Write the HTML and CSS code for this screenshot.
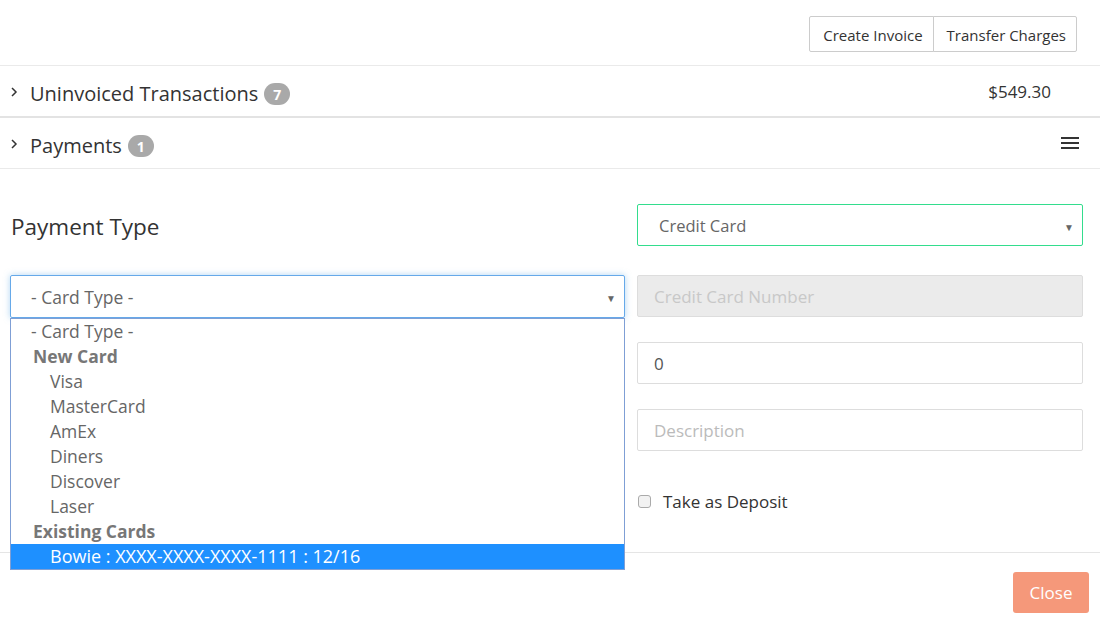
FILE: index.html
```html
<!DOCTYPE html>
<html>
<head>
<meta charset="utf-8">
<link rel="stylesheet" href="styles.css">
</head>
<body>
<div class="toolbar">
  <div class="btn-group">
    <button class="btn">Create Invoice</button>
    <button class="btn">Transfer Charges</button>
  </div>
</div>
<div class="acc-row first">
  <div class="acc-title">
    <svg class="chev" width="8" height="12" viewBox="0 0 8 12"><path d="M2 2l4 4-4 4" fill="none" stroke="#333" stroke-width="1.5"/></svg>
    <span>Uninvoiced Transactions</span>
    <span class="badge">7</span>
  </div>
  <div class="amount">$549.30</div>
</div>
<div class="acc-row second">
  <div class="acc-title">
    <svg class="chev" width="8" height="12" viewBox="0 0 8 12"><path d="M2 2l4 4-4 4" fill="none" stroke="#333" stroke-width="1.5"/></svg>
    <span>Payments</span>
    <span class="badge">1</span>
  </div>
  <svg class="menu" width="18" height="14" viewBox="0 0 18 14"><rect x="0" y="1" width="18" height="2" fill="#333"/><rect x="0" y="6" width="18" height="2" fill="#333"/><rect x="0" y="11" width="18" height="2" fill="#333"/></svg>
</div>
<div class="form">
  <div class="grid">
    <div class="label-cell">Payment Type</div>
    <div class="select green"><span>Credit Card</span><span class="arrow">▼</span></div>

    <div class="left-cell">
      <div class="select focus"><span>- Card Type -</span><span class="arrow">▼</span></div>
      <ul class="listbox">
        <li class="opt top">- Card Type -</li>
        <li class="grp">New Card</li>
        <li class="opt">Visa</li>
        <li class="opt">MasterCard</li>
        <li class="opt">AmEx</li>
        <li class="opt">Diners</li>
        <li class="opt">Discover</li>
        <li class="opt">Laser</li>
        <li class="grp">Existing Cards</li>
        <li class="opt sel">Bowie : XXXX-XXXX-XXXX-1111 : 12/16</li>
      </ul>
    </div>
    <div class="input disabled">Credit Card Number</div>

    <div></div>
    <div class="input">0</div>

    <div></div>
    <div class="input ph">Description</div>

    <div></div>
    <label class="check"><span class="box"></span>Take as Deposit</label>
  </div>
</div>
<div class="footer">
  <button class="close">Close</button>
</div>
</body>
</html>
```
FILE: styles.css
```css
* { box-sizing: border-box; }
body {
  margin: 0;
  font-family: "Open Sans", "Liberation Sans", sans-serif;
  color: #333;
  background: #fff;
  width: 1100px;
  height: 621px;
  overflow: hidden;
}
.toolbar {
  display: flex;
  justify-content: flex-end;
  padding: 16px 23px 13px 0;
  border-bottom: 1px solid #eaeaea;
}
.btn-group { display: flex; }
.btn {
  font-family: inherit;
  font-size: 15px;
  color: #333;
  background: #fff;
  border: 1px solid #ccc;
  height: 36px;
  padding: 1px 10px 0 13px;
  margin: 0;
  border-radius: 2px;
}
.btn + .btn { margin-left: -1px; border-top-left-radius: 0; border-bottom-left-radius: 0; }
.btn:first-child { border-top-right-radius: 0; border-bottom-right-radius: 0; }
.acc-row {
  display: flex;
  align-items: center;
  justify-content: space-between;
  padding: 4px 21px 0 10px;
}
.acc-row.first { height: 52px; border-bottom: 2px solid #e3e3e3; padding-right: 49px; }
.acc-row.second { height: 51px; border-bottom: 1px solid #eaeaea; }
.acc-title { display: flex; align-items: center; font-size: 20px; }
.chev { margin-right: 12px; margin-top: -3px; }
.badge {
  display: inline-flex;
  align-items: center;
  justify-content: center;
  height: 22px;
  width: 26px;
  margin-left: 6px;
  margin-top: 2px;
  border-radius: 11px;
  background: #a9a9a9;
  color: #fff;
  font-size: 14px;
  font-weight: 700;
}
.amount { font-size: 17px; margin-top: -4px; }
.menu { margin-top: -4px; }

.form { padding: 35px 17px 0 10px; }
.grid {
  display: grid;
  grid-template-columns: 615px 446px;
  column-gap: 12px;
  grid-template-rows: 46px 42px 42px 42px 50px;
  row-gap: 25px;
}
.label-cell { font-size: 22.5px; display: flex; align-items: center; padding-left: 1px; height: 42px; padding-top: 2px; }
.select {
  height: 42px;
  border: 1px solid #ddd;
  border-radius: 2px;
  display: flex;
  align-items: center;
  justify-content: space-between;
  padding: 1px 8px 0 20px;
  font-size: 17px;
  color: #666;
}
.select.green { border-color: #33dd8d; font-size: 16.5px; padding-left: 21px; }
.select.focus {
  height: 43px;
  border-color: #66a9e9;
  box-shadow: 0 0 6px rgba(102, 175, 233, 0.5);
  font-size: 17.5px;
}
.arrow { font-size: 10px; color: #666; margin-top: 2px; }
.left-cell { position: relative; }
.listbox {
  position: absolute;
  left: 0;
  top: 43px;
  width: 615px;
  margin: 0;
  padding: 0;
  list-style: none;
  background: #fff;
  border: 1px solid #7f9fd5;
  z-index: 5;
  font-size: 17.5px;
}
.listbox li { height: 25px; line-height: 25px; white-space: nowrap; }
.opt { color: #666; padding-left: 39px; }
.opt.top { padding-left: 20px; }
.grp { color: #777; font-weight: 700; padding-left: 22px; }
.opt.sel { background: #1e90ff; color: #fff; font-size: 18px; }

.input {
  height: 42px;
  border: 1px solid #ddd;
  border-radius: 2px;
  display: flex;
  align-items: center;
  padding: 0 0 0 16px;
  font-size: 17px;
  color: #555;
}
.input.disabled { background: #ebebeb; color: #c8c8c8; }
.input.ph { color: #bbb; }
.check {
  display: flex;
  align-items: center;
  font-size: 17px;
  color: #333;
  padding-left: 1px;
}
.box {
  width: 13px;
  height: 13px;
  border: 1px solid #aaa;
  border-radius: 3px;
  background: #f2f2f2;
  margin-right: 12px;
}
.footer {
  margin-top: 26px;
  border-top: 1px solid #e5e5e5;
  display: flex;
  justify-content: flex-end;
  padding: 19px 11px 0 0;
}
.close {
  font-family: inherit;
  font-size: 17px;
  color: #fff;
  background: #f5987a;
  border: none;
  border-radius: 3px;
  width: 76px;
  height: 41px;
  padding: 0;
}
```
